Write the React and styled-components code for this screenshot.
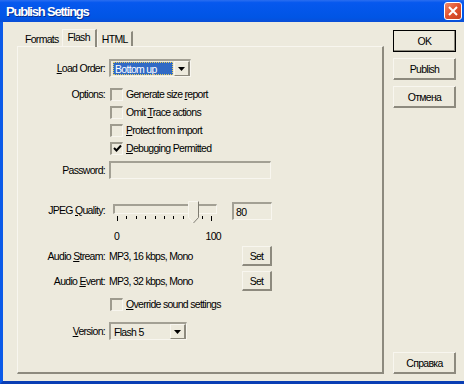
import styled, { createGlobalStyle } from 'styled-components';

const GlobalStyle = createGlobalStyle`
  html, body {
    margin: 0;
    padding: 0;
    background: #EDEADD;
  }
  body {
    font-family: "Liberation Sans", Arial, sans-serif;
    font-size: 10.5px;
    letter-spacing: -0.7px;
    color: #000;
  }
`;

const LIGHT = '#F8F6EF';
const SHADE = '#8D8A7E';
const GROOVE = '#A3A094';

const Window = styled.div`
  width: 464px;
  height: 384px;
  display: flex;
  flex-direction: column;
  overflow: hidden;
`;

const TitleBar = styled.div`
  height: 22px;
  flex: none;
  display: flex;
  align-items: center;
  justify-content: space-between;
  padding: 0 2px 0 6px;
  background: linear-gradient(#2A6EF0 0%, #0658EE 12%, #0055E5 80%, #0A4ED6 100%);
`;

const Title = styled.span`
  color: #fff;
  font-weight: bold;
  font-size: 13px;
  letter-spacing: -1.2px;
  text-shadow: 1px 1px #0A2E8C;
`;

const CloseBtn = styled.div`
  width: 18px;
  height: 18px;
  box-sizing: border-box;
  border: 1px solid #fff;
  border-radius: 3px;
  background: linear-gradient(135deg, #F08A6A, #E0512E 50%, #C8401F);
  display: flex;
  align-items: center;
  justify-content: center;
`;

const Frame = styled.div`
  flex: 1;
  display: flex;
  border-left: 3px solid #0B5AE8;
  border-bottom: 3px solid #0A3EB4;
  background: #EDEADD;
  padding: 7px 8px 7px 14px;
  gap: 9px;
  min-height: 0;
`;

const TabArea = styled.div`
  width: 367px;
  display: flex;
  flex-direction: column;
`;

const TabStrip = styled.div`
  height: 17px;
  display: flex;
  align-items: flex-end;
`;

const Tab = styled.div`
  height: ${p => (p.$active ? 18 : 15)}px;
  box-sizing: border-box;
  padding: 0 ${p => p.$padR}px ${p => (p.$active ? 3 : 0)}px ${p => p.$padL}px;
  display: flex;
  align-items: center;
  border-top: 1px solid ${p => (p.$active ? LIGHT : 'transparent')};
  border-left: 1px solid ${p => (p.$edge ? LIGHT : 'transparent')};
  border-right: 2px solid ${p => (p.$edge ? SHADE : 'transparent')};
  margin-bottom: ${p => (p.$active ? -1 : 0)}px;
  position: relative;
`;

const Panel = styled.div`
  flex: 1;
  display: flex;
  flex-direction: column;
  border-top: 1px solid ${LIGHT};
  border-left: 1px solid ${LIGHT};
  border-right: 2px solid ${SHADE};
  border-bottom: 2px solid ${SHADE};
`;

const Row = styled.div`
  display: flex;
  align-items: ${p => p.$align || 'center'};
  gap: 4px;
  height: ${p => p.$h}px;
  margin-top: ${p => p.$mt}px;
`;

const Label = styled.div`
  width: 87px;
  flex: none;
  text-align: right;
  line-height: ${p => p.$lh || 18}px;
  white-space: nowrap;
`;

const Key = styled.span`
  text-decoration: underline;
`;

const Field = styled.div`
  width: ${p => p.$w}px;
  height: ${p => p.$h || 18}px;
  box-sizing: border-box;
  border-top: 2px solid ${GROOVE};
  border-left: 2px solid ${GROOVE};
  border-right: 1px solid ${LIGHT};
  border-bottom: 1px solid ${LIGHT};
  display: flex;
  align-items: center;
  padding: 0 0 0 2px;
  margin-top: ${p => p.$mt || 0}px;
  margin-left: ${p => p.$ml || 0}px;
`;

const Highlight = styled.div`
  flex: 1;
  align-self: stretch;
  margin: 1px 1px 1px 0;
  background: #316AC5;
  color: #fff;
  outline: 1px dotted #E8D060;
  outline-offset: -1px;
  padding-left: 2px;
  display: flex;
  align-items: center;
`;

const FieldText = styled.div`
  flex: 1;
  padding-left: 1px;
`;

const DropBtn = styled.div`
  width: 16px;
  align-self: stretch;
  box-sizing: border-box;
  border-top: 1px solid ${LIGHT};
  border-left: 1px solid ${LIGHT};
  border-right: 2px solid ${SHADE};
  border-bottom: 1px solid ${SHADE};
  display: flex;
  align-items: center;
  justify-content: center;
`;

const CheckList = styled.div`
  display: flex;
  flex-direction: column;
`;

const CheckRow = styled.div`
  height: 18px;
  display: flex;
  align-items: center;
  gap: 3px;
  margin-left: 1px;
  white-space: nowrap;
`;

const Box = styled.div`
  width: 13px;
  height: 13px;
  box-sizing: border-box;
  border-top: 2px solid #9E9B8E;
  border-left: 2px solid #9E9B8E;
  border-right: 1px solid ${LIGHT};
  border-bottom: 1px solid ${LIGHT};
  display: flex;
  align-items: center;
  justify-content: center;
`;

const SliderBlock = styled.div`
  width: 104px;
  margin-left: 4px;
  display: flex;
  flex-direction: column;
  position: relative;
`;

const Track = styled.div`
  height: 10px;
  margin-top: 4px;
  box-sizing: border-box;
  border-top: 2px solid ${GROOVE};
  border-left: 2px solid ${GROOVE};
  border-right: 1px solid ${LIGHT};
  border-bottom: 1px solid ${LIGHT};
`;

const Thumb = styled.svg`
  position: absolute;
  left: 75px;
  top: 1px;
`;

const Ticks = styled.div`
  height: 5px;
  margin-top: 2px;
  padding: 0 5px 0 4px;
  display: flex;
  justify-content: space-between;
  align-items: flex-start;
`;

const Tick = styled.div`
  width: 1px;
  height: ${p => (p.$long ? 5 : 3)}px;
  background: #000;
`;

const ScaleLabels = styled.div`
  width: 107px;
  margin-left: 1px;
  margin-top: 9px;
  line-height: 12px;
  display: flex;
  justify-content: space-between;
`;

const Value = styled.div`
  width: 133px;
  flex: none;
  white-space: nowrap;
`;

const SmallButton = styled.div`
  width: 30px;
  height: 20px;
  box-sizing: border-box;
  border-top: 1px solid ${LIGHT};
  border-left: 1px solid ${LIGHT};
  border-right: 2px solid ${SHADE};
  border-bottom: 2px solid ${SHADE};
  display: flex;
  align-items: center;
  justify-content: center;
  margin-left: -4px;
`;

const Side = styled.div`
  width: 63px;
  display: flex;
  flex-direction: column;
  gap: 6px;
  padding-top: 1px;
`;

const Button = styled.div`
  height: 22px;
  box-sizing: border-box;
  border: 1px solid;
  border-color: ${p => (p.$default ? '#000' : `${LIGHT} ${SHADE} ${SHADE} ${LIGHT}`)};
  box-shadow: inset -1px -1px ${SHADE};
  display: flex;
  align-items: center;
  justify-content: center;
  margin-top: ${p => (p.$bottom ? 'auto' : '0')};
`;

const Arrow = () => (
  <svg width="7" height="4" viewBox="0 0 7 4">
    <path d="M0 0h7L3.5 4z" fill="#000" />
  </svg>
);

function Select({ w, mt, children }) {
  return (
    <Field $w={w} $mt={mt}>
      {children}
      <DropBtn>
        <Arrow />
      </DropBtn>
    </Field>
  );
}

function Check({ checked, children }) {
  return (
    <CheckRow>
      <Box>
        {checked && (
          <svg width="9" height="9" viewBox="0 0 9 9">
            <path d="M1 4l2.5 2.5L8 1.5" stroke="#000" strokeWidth="2" fill="none" />
          </svg>
        )}
      </Box>
      <span>{children}</span>
    </CheckRow>
  );
}

export default function App() {
  const ticks = Array.from({ length: 11 }, (_, i) => i);
  return (
    <>
      <GlobalStyle />
      <Window>
        <TitleBar>
          <Title>Publish Settings</Title>
          <CloseBtn>
            <svg width="10" height="10" viewBox="0 0 10 10">
              <path d="M1 1l8 8M9 1l-8 8" stroke="#fff" strokeWidth="2" />
            </svg>
          </CloseBtn>
        </TitleBar>
        <Frame>
          <TabArea>
            <TabStrip>
              <Tab $padL={7} $padR={1}>Formats</Tab>
              <Tab $active $edge $padL={5} $padR={5}>Flash</Tab>
              <Tab $edge $padL={4} $padR={3}>HTML</Tab>
            </TabStrip>
            <Panel>
              <Row $h={18} $mt={12}>
                <Label><Key>L</Key>oad Order:</Label>
                <Select w={82}>
                  <Highlight>Bottom up</Highlight>
                </Select>
              </Row>

              <Row $h={72} $mt={8} $align="flex-start">
                <Label>Options:</Label>
                <CheckList>
                  <Check>Generate size <Key>r</Key>eport</Check>
                  <Check>Omit <Key>T</Key>race actions</Check>
                  <Check><Key>P</Key>rotect from import</Check>
                  <Check checked><Key>D</Key>ebugging Permitted</Check>
                </CheckList>
              </Row>

              <Row $h={18} $mt={4}>
                <Label>Password:</Label>
                <Field $w={162} />
              </Row>

              <Row $h={42} $mt={21} $align="flex-start">
                <Label $lh={20}>JPEG <Key>Q</Key>uality:</Label>
                <SliderBlock>
                  <Track />
                  <Thumb width="12" height="23" viewBox="0 0 12 23">
                    <path d="M0.5 0.5h10v16l-5 5.5l-5-5.5z" fill="#EDEADD" stroke={LIGHT} />
                    <path d="M10.5 0.5v16l-5 5.5" fill="none" stroke="#7E7B70" />
                  </Thumb>
                  <Ticks>
                    {ticks.map(i => (
                      <Tick key={i} $long={i === 0 || i === 10} />
                    ))}
                  </Ticks>
                  <ScaleLabels>
                    <span>0</span>
                    <span>100</span>
                  </ScaleLabels>
                </SliderBlock>
                <Field $w={40} $mt={2} $ml={11}>80</Field>
              </Row>

              <Row $h={20} $mt={4}>
                <Label>Audio <Key>S</Key>tream:</Label>
                <Value>MP3, 16 kbps, Mono</Value>
                <SmallButton>Set</SmallButton>
              </Row>

              <Row $h={20} $mt={5}>
                <Label>Audio <Key>E</Key>vent:</Label>
                <Value>MP3, 32 kbps, Mono</Value>
                <SmallButton>Set</SmallButton>
              </Row>

              <Row $h={18} $mt={4}>
                <Label />
                <Check><Key>O</Key>verride sound settings</Check>
              </Row>

              <Row $h={18} $mt={9}>
                <Label><Key>V</Key>ersion:</Label>
                <Select w={78}>
                  <FieldText>Flash 5</FieldText>
                </Select>
              </Row>
            </Panel>
          </TabArea>

          <Side>
            <Button $default>OK</Button>
            <Button>Publish</Button>
            <Button>Отмена</Button>
            <Button $bottom>Справка</Button>
          </Side>
        </Frame>
      </Window>
    </>
  );
}
